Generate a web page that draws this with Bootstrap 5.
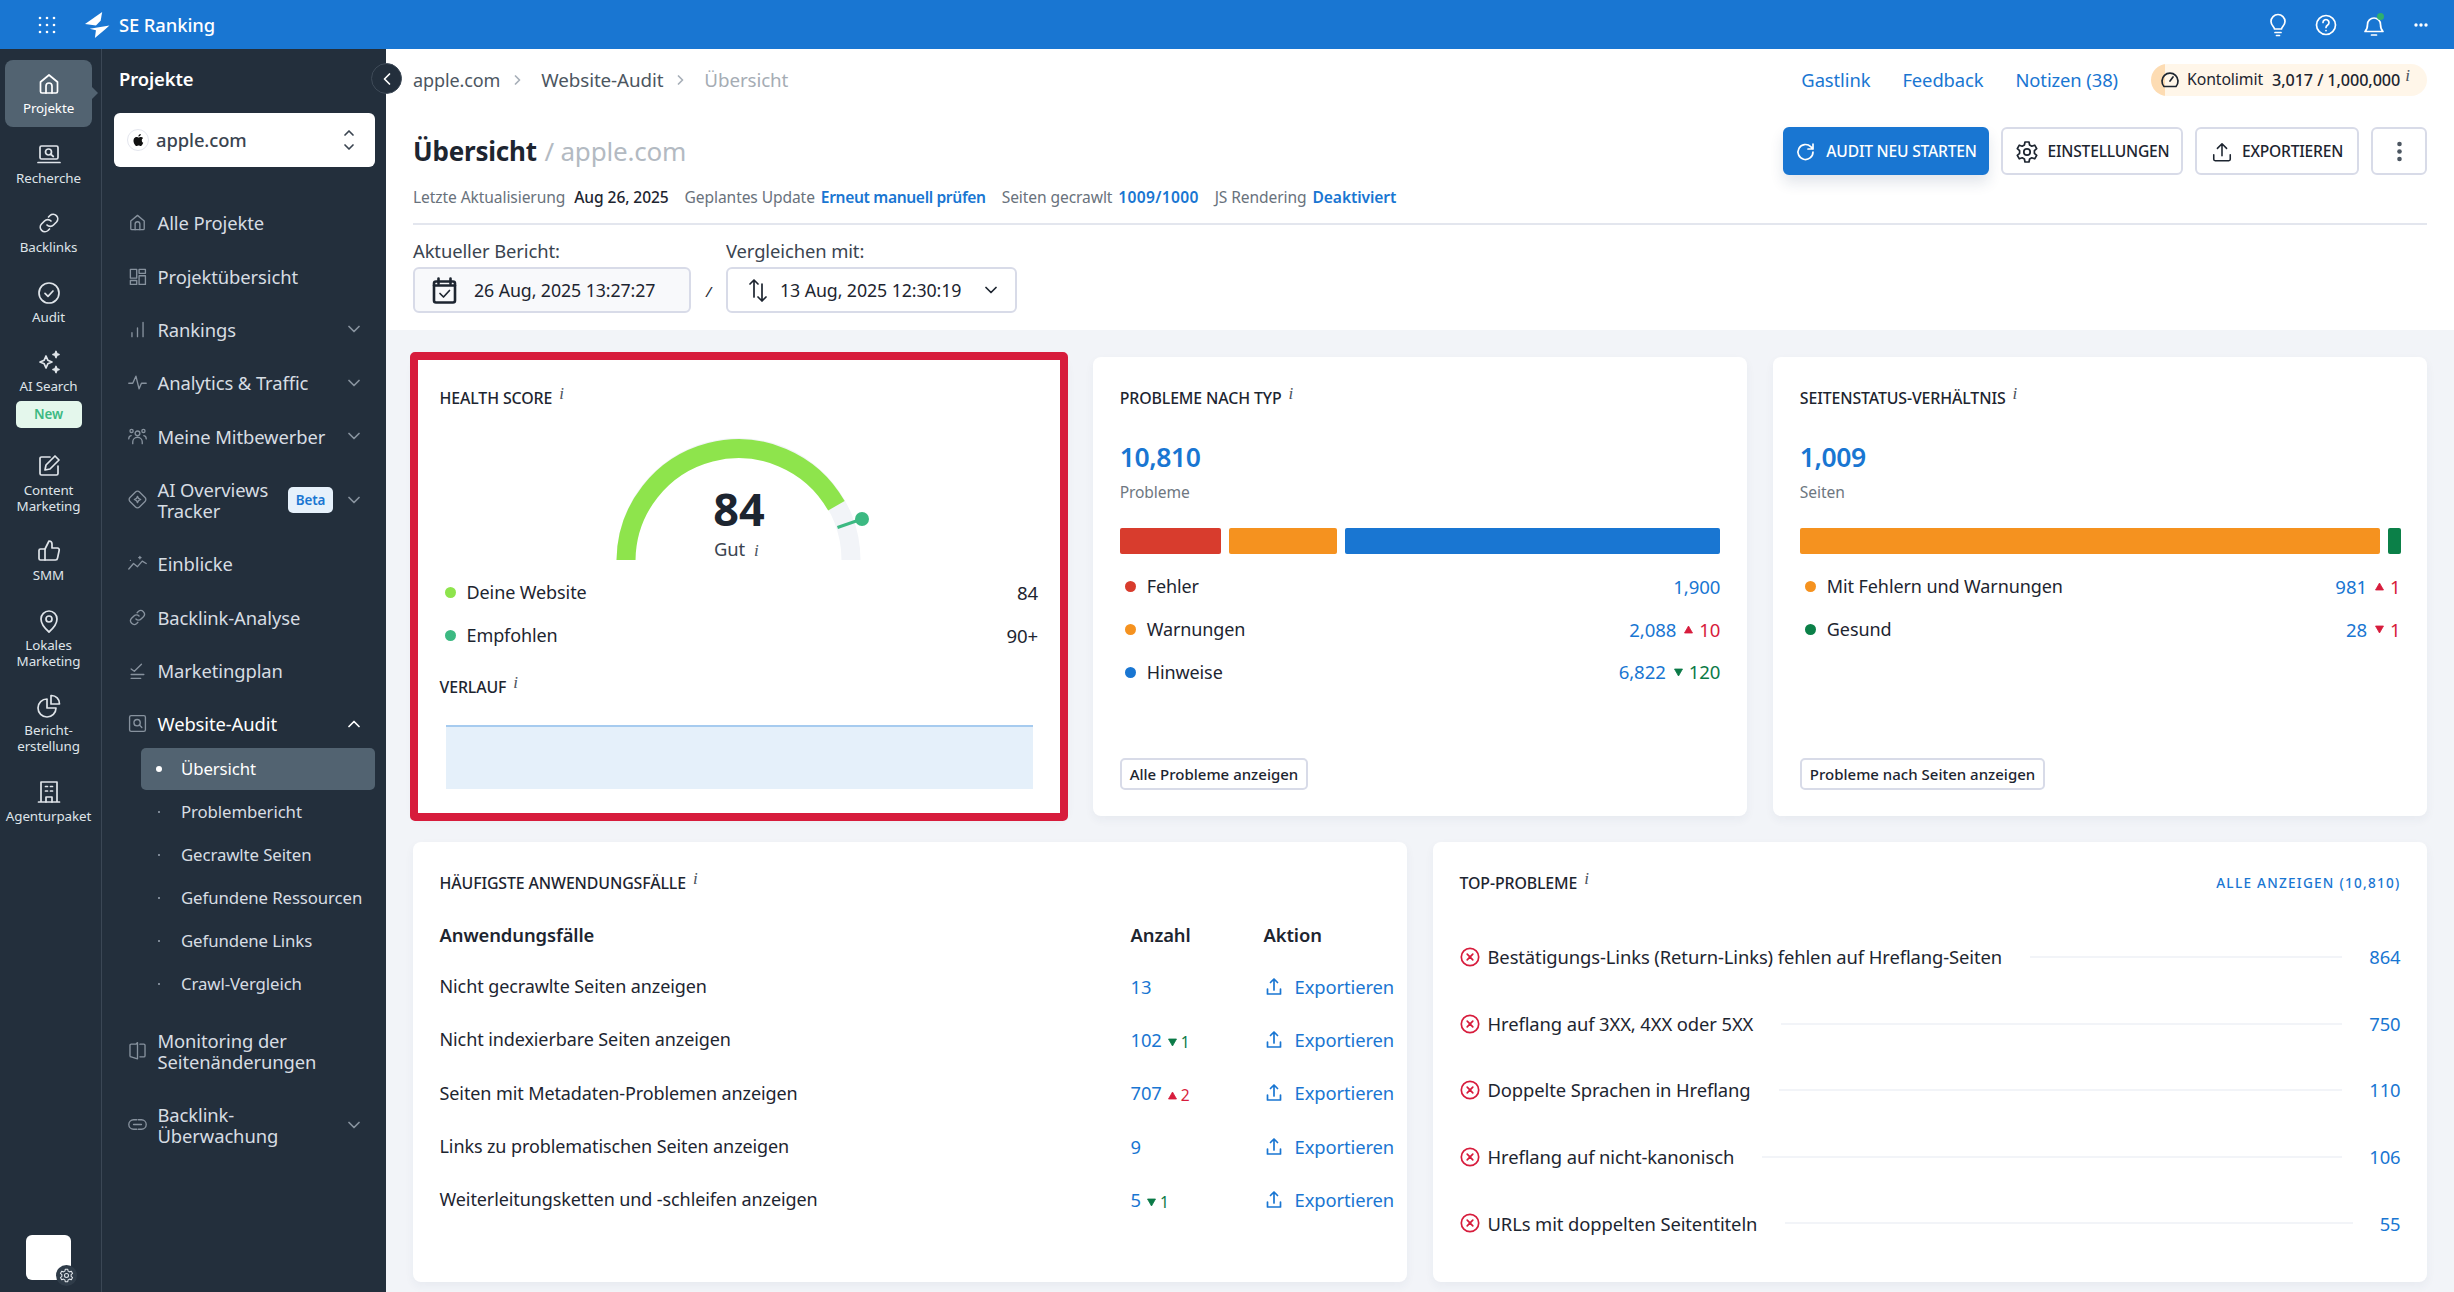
<!DOCTYPE html>
<html lang="de">
<head>
<meta charset="utf-8">
<title>SE Ranking – Übersicht</title>
<link href="https://cdn.jsdelivr.net/npm/bootstrap@5.3.0/dist/css/bootstrap.min.css" rel="stylesheet">
<style>
:root{--blue:#1976d2;--ink:#1d2530;--side:#232f3c;--grey:#6e7781;--line:#d8dbe8;--bg:#f2f4f8}
html,body{height:100%}
body{font-family:"Noto Sans",sans-serif;font-size:18.4px;color:var(--ink);background:var(--bg);overflow:hidden;letter-spacing:-.1px}
a{color:var(--blue);text-decoration:none}
svg{display:block;flex:none}
.ic{fill:none;stroke:currentColor;stroke-width:1.7;stroke-linecap:round;stroke-linejoin:round}
.topbar{height:49px;background:var(--blue);color:#fff;padding:0}
.topbar .grid-ic{margin-left:38px}
.topbar .logo{margin-left:29px}
.topbar .brand{margin-left:9px;font-size:18.4px;font-weight:500;color:#fff}
.topbar .tools{gap:26px;margin-left:auto;margin-right:26px}
.topbar .more{margin-left:3px}
.bell-dot{position:absolute;right:1px;top:0;width:7px;height:7px;border-radius:50%;background:#2fae6e}
.shell{height:1243px}
.rail{width:102px;flex:none;background:var(--side);border-right:1px solid #3b4755;padding:11px 0 0 5px;position:relative}
.rail-item{width:87px;padding:12px 0 13.5px;color:#dfe4e9;text-align:center;font-size:13.4px;line-height:16px;border-radius:8px;position:relative;display:block}
.rail-item svg{margin:0 auto 4px;width:24px;height:24px}
.rail-item.active{background:#526371;color:#fff;height:67px;margin-bottom:2.5px;padding-bottom:0}
.rail-item.active::after{content:"";position:absolute;right:-6px;top:27px;border-left:6px solid #526371;border-top:6px solid transparent;border-bottom:6px solid transparent}
.new-badge{display:block;width:66px;height:27px;line-height:27px;margin:7px auto 0;background:#e4f7ec;color:#3cb982;border-radius:5px;font-weight:600;font-size:13.4px}
.rail-foot{position:absolute;left:26px;top:1186px;width:45px;height:45px;background:#fff;border-radius:6px}
.rail-gear{position:absolute;right:-6px;bottom:-6px;width:21px;height:21px;border-radius:50%;background:#2f3c49;color:#dfe4e9;display:flex;align-items:center;justify-content:center}
.side{width:284px;flex:none;background:var(--side);padding:0 11px 0 12px;position:relative;color:#d7dde3}
.side h2{font-size:18.4px;font-weight:600;color:#fff;margin:0;height:64px;line-height:60px;padding-left:5px}
.proj-sel{height:54px;background:#fff;border-radius:6px;color:#3a4450;padding:0 20px 0 13px;font-size:18.4px;margin-bottom:29px;font-weight:500}
.apple-dot{width:22px;height:22px;border-radius:50%;background:#fff;border:1px solid #e4e6ee;color:#111;margin-right:7px;display:flex;align-items:center;justify-content:center}
.nav-row{min-height:53.4px;padding-left:14px;padding-right:12px;color:#d7dde3;font-size:18.4px;line-height:21px;display:flex;align-items:center}
.nav-row>.ni{width:19px;height:19px;color:#87929e;margin-right:10.5px}
.nav-row .nt{flex:1}
.nav-row .chev{width:12px;height:12px;color:#87929e;margin-right:3px}
.nav-row.tall{min-height:74px}
.nav-row.open{color:#fff;margin-bottom:-3px}
.nav-row.open .chev{color:#fff}
.beta{background:#e6f1fb;color:var(--blue);font-size:13.4px;font-weight:600;line-height:26px;height:26px;width:45px;text-align:center;border-radius:5px;margin-right:15px}
.nav-sub{min-height:43px;margin-left:27px;padding-left:15px;font-size:16.8px;color:#d7dde3;display:flex;align-items:center;border-radius:5px}
.nav-sub::before{content:"";width:2px;height:2px;border-radius:50%;background:#9aa5b0;margin-right:21px;margin-left:2px}
.nav-sub.active{background:#526371;color:#fff;height:42px;min-height:42px;margin-bottom:1px}
.nav-sub.active::before{width:6px;height:6px;background:#fff;margin-left:0;margin-right:19px}
.sub-wrap{margin-bottom:8px}
.collapse-btn{position:absolute;left:-15px;width:31px;height:31px;border-radius:50%;top:14px;background:var(--side);border:1px solid #3f4b58;color:#fff;display:flex;align-items:center;justify-content:center;z-index:3}
.main{flex:1;min-width:0;position:relative}
.head{background:#fff;padding:0 27px 17px 27px}
.crumb{height:62px;font-size:18.8px;color:#4c5661}
.crumb>span:first-child{font-size:18px}
.crumb .sep{width:7px;height:10px;color:#a7afb8;margin:0 20px 0 14px}
.crumb .cur{color:#a5acb4}
.toplinks{margin-left:auto;gap:32px;font-size:18.4px}
.limit{height:32px;margin-left:33px;width:276px;border-radius:16px;background:linear-gradient(90deg,#fddcb3 14px,#fff6e9 14px);padding-left:9px;font-size:15.8px;color:var(--ink)}
.limit svg{margin-right:7px}
.limit b{font-weight:500;margin-left:9px;font-size:16.2px}
.limit .info{margin-left:5px;vertical-align:0;margin-top:-8px}
.title-row{padding-top:16px;height:64px}
.page-title{font-size:26px;font-weight:700;margin:2px 0 0;letter-spacing:-.2px}
.page-title span{font-weight:400;color:#b3bac2;margin-left:1px}
.acts{margin-left:auto;gap:12px}
.btn-act{height:48px;font-size:15.6px;font-weight:500;text-transform:uppercase;border:2px solid var(--line);background:#fff;color:var(--ink);border-radius:6px;display:flex;align-items:center;justify-content:center;padding:1px 0 0;gap:9px;letter-spacing:-.2px}
.btn-act.prim{background:var(--blue);border-color:var(--blue);color:#fff;box-shadow:0 8px 14px rgba(25,50,90,.12);width:206px}
.btn-act.w-set{width:182px}
.btn-act.w-exp{width:164px}
.btn-act.w-more{width:56px;padding:0}
.meta{margin-top:12px;font-size:15.6px;line-height:20px;color:#69727c}
.meta>span{margin-right:16px}
.meta b{font-weight:600;color:var(--blue);margin-left:6px}
.meta b.tight{letter-spacing:-.35px}
.meta b.wide{letter-spacing:.3px}
.meta em{font-style:normal;font-weight:500;color:var(--ink);margin-left:9px}
.head hr{margin:16px 0 15px;border:0;height:2px;background:#e3e6ee;opacity:1}
.rep-lab{line-height:22px;margin-bottom:5px;color:#3a4450;font-size:18.4px}
.dbox{height:46px;border:2px solid var(--line);border-radius:6px;font-size:17.8px}
.dbox.a{width:278px;background:#f8f9fb;padding-left:17px;gap:17px}
.dbox.b{width:291px;padding-left:20px;gap:12px}
.dbox .cd{margin-left:12px;color:var(--ink)}
.slash{width:35px;text-align:center;font-size:15px;font-style:italic;margin-top:auto;margin-bottom:11px}
.content{padding:27px 27px 0 27px}
.grid3{display:grid;grid-template-columns:repeat(3,1fr);grid-template-rows:459px;gap:26.5px;height:459px}
.grid2{display:grid;grid-template-columns:1fr 1fr;grid-template-rows:440px;gap:26px;height:440px;margin-top:26px}
.panel{border:0;border-radius:8px;background:#fff;box-shadow:0 4px 10px rgba(40,60,100,.05);position:relative}
.panel .card-body{padding:30px 26.5px 26px;display:flex;flex-direction:column}
.ptitle{font-size:15.9px;font-weight:500;line-height:22px;text-transform:uppercase;margin:0;color:var(--ink);letter-spacing:-.12px}
.info{font-family:"Liberation Serif",serif;font-style:italic;font-size:17px;line-height:0;color:#4b545e;margin-left:7px;vertical-align:5px;text-transform:none}
.hl-frame{position:absolute;top:-5px;bottom:-5px;left:-3px;right:-1px;border:8px solid #d71c3c;border-radius:5px;pointer-events:none}
.bignum{font-size:26.5px;font-weight:600;line-height:36px;color:var(--blue);margin-top:30px;letter-spacing:-.4px}
.sublab{font-size:15.6px;line-height:22px;color:#6e7781;margin-top:6px}
.stack{height:26px;margin-top:25px;gap:8px;display:flex}
.stack i{display:block;border-radius:2px;height:26px}
.rows{margin-top:11.6px}
.lrow{height:42.7px;display:flex;align-items:center;font-size:18px}
.dot{width:11px;height:11px;border-radius:50%;margin:0 11px 0 5px;flex:none}
.val{margin-left:auto;color:var(--blue);font-size:18.6px}
.delta{display:inline-flex;align-items:center;margin-left:8px;gap:6px;font-size:18.6px}
.up{color:#d71c3c}.down{color:#0b7a47}
.tri{width:9px;height:9px}
.btn-small{height:32px;padding:0 8px;font-size:15px;font-weight:500;line-height:28px;color:var(--ink);border:2px solid var(--line);border-radius:5px;background:#fff;margin-top:auto;align-self:flex-start}
.gauge{margin:21px auto 0;width:280px;height:130px}
.case-table{margin:0;width:960px;table-layout:fixed;--bs-table-bg:transparent;color:var(--ink)}
.case-table th,.case-table td{padding:0;vertical-align:middle;border:0;color:var(--ink);background:transparent}
.case-table th{height:50px;font-weight:600}
.case-table td{height:53.3px}
.case-table td:first-child{font-size:18px}
.case-table a{color:var(--blue)}
.case-table .delta{margin-left:6px;font-size:15.6px;gap:4px}
.exp{gap:13px}
.exp svg{margin-left:2px}
.top-row{height:66.6px;display:flex;align-items:center}
.top-row .xic{margin-right:8px;color:#d71c3c}
.top-row .rule{flex:1;height:2px;background:var(--bg);margin:0 27px 0 28px}
.all-link{margin-left:auto;font-size:13.6px;letter-spacing:1.25px;font-weight:500;text-transform:uppercase}
</style>
</head>
<body>
<svg width="0" height="0" style="position:absolute">
<defs>
<symbol id="home" viewBox="0 0 24 24"><path d="M3.500 19.500V10L12 3l8.500 7v9.500a1.500 1.500 0 0 1-1.500 1.500H5a1.500 1.500 0 0 1-1.500-1.500z"/><path d="M9 21v-7a3 3 0 0 1 6 0v7"/></symbol>
<symbol id="search" viewBox="0 0 24 24"><rect x="3" y="4" width="18" height="13" rx="1.500"/><path d="M1 20.500h22"/><circle cx="11.500" cy="10" r="3"/><path d="M14 12.500l2.300 2"/></symbol>
<symbol id="link" viewBox="0 0 24 24"><path d="M10 14a4.500 4.500 0 0 0 6.500 0l3-3a4.600 4.600 0 0 0-6.500-6.500l-1.500 1.500"/><path d="M14 10a4.500 4.500 0 0 0-6.500 0l-3 3a4.600 4.600 0 0 0 6.500 6.500l1.500-1.500"/></symbol>
<symbol id="check" viewBox="0 0 24 24"><circle cx="12" cy="12" r="10"/><path d="M8 12.300l3 3 5-5.300"/></symbol>
<symbol id="spark" viewBox="0 0 24 24"><path d="M9 6l1.800 4.200L15 12l-4.200 1.800L9 18l-1.800-4.200L3 12l4.200-1.800z"/><path d="M19 1.500l.8 2.200 2.200.8-2.200.8L19 7.500l-.8-2.200-2.200-.8 2.200-.8zM19 16.500l.8 2.200 2.200.8-2.200.8-.8 2.200-.8-2.200-2.200-.8 2.200-.8z" fill="currentColor"/></symbol>
<symbol id="edit" viewBox="0 0 24 24"><path d="M13 3H4.500A1.500 1.500 0 0 0 3 4.500v15A1.500 1.500 0 0 0 4.500 21h15a1.500 1.500 0 0 0 1.500-1.500V12"/><path d="M18 2l4 4-9 9-5 1 1-5z"/></symbol>
<symbol id="thumb" viewBox="0 0 24 24"><path d="M8 10l4-8a3 3 0 0 1 3 3v4h5.500a1.800 1.800 0 0 1 1.700 2.200l-1.700 8A2 2 0 0 1 18.500 21H8z"/><path d="M8 10H3.500A1.500 1.500 0 0 0 2 11.500v8A1.500 1.500 0 0 0 3.500 21H8"/></symbol>
<symbol id="pin" viewBox="0 0 24 24"><path d="M12 23s-8-7-8-13a8 8 0 0 1 16 0c0 6-8 13-8 13z"/><circle cx="12" cy="10" r="3"/></symbol>
<symbol id="pie" viewBox="0 0 24 24"><path d="M10 5a9 9 0 1 0 9 9h-9z"/><path d="M14 1.500a8 8 0 0 1 8.500 8.500H14z"/></symbol>
<symbol id="build" viewBox="0 0 24 24"><path d="M4 22V2h16v20M1.500 22h21"/><path d="M9 22v-5h6v5M8.500 6.500h2M13.500 6.500h2M8.500 11h2M13.500 11h2"/></symbol>
<symbol id="grid4" viewBox="0 0 24 24"><rect x="3" y="3" width="8" height="11"/><rect x="14" y="3" width="8" height="5"/><rect x="3" y="17" width="8" height="5"/><rect x="14" y="11" width="8" height="11"/></symbol>
<symbol id="bars" viewBox="0 0 24 24"><path d="M5 21v-5M12 21V10M19 21V3"/></symbol>
<symbol id="pulse" viewBox="0 0 24 24"><path d="M1 13h5l4-9 4 16 3-7h6"/></symbol>
<symbol id="people" viewBox="0 0 24 24"><circle cx="12" cy="8" r="3"/><circle cx="4.500" cy="5" r="2"/><circle cx="19.500" cy="5" r="2"/><path d="M6 21v-2a6 6 0 0 1 12 0v2M1 15a4 4 0 0 1 3-4M23 15a4 4 0 0 0-3-4"/></symbol>
<symbol id="diamond" viewBox="0 0 24 24"><path d="M9.500 2.500a3.500 3.500 0 0 1 5 0l7 7a3.500 3.500 0 0 1 0 5l-7 7a3.500 3.500 0 0 1-5 0l-7-7a3.500 3.500 0 0 1 0-5z"/><path d="M12 8l1.300 2.700L16 12l-2.700 1.300L12 16l-1.300-2.700L8 12l2.700-1.300z"/></symbol>
<symbol id="insight" viewBox="0 0 24 24"><path d="M1 19l6-7 5 4 6-7 5 3"/><path d="M3 8h.1M15 3v3M13.500 4.500h3"/></symbol>
<symbol id="plan" viewBox="0 0 24 24"><path d="M4 10l4 3 9-9M4 17h16M4 22h12"/></symbol>
<symbol id="audit" viewBox="0 0 24 24"><rect x="2" y="2" width="20" height="20" rx="2"/><circle cx="11.500" cy="11" r="4"/><path d="M14.500 14l3 3"/></symbol>
<symbol id="compare" viewBox="0 0 24 24"><path d="M10 4H4a1.500 1.500 0 0 0-1.500 1.500v13A1.500 1.500 0 0 0 4 20l8 2.500V2zM15 4h5a1.500 1.500 0 0 1 1.500 1.500v13A1.500 1.500 0 0 1 20 20h-5"/></symbol>
<symbol id="chain" viewBox="0 0 24 24"><path d="M11 6H7a6 6 0 0 0 0 12h4M13 6h4a6 6 0 0 1 0 12h-4M7 12h10"/></symbol>
<symbol id="down" viewBox="0 0 12 12"><path d="M1 3.500l5 5 5-5"/></symbol>
<symbol id="up" viewBox="0 0 12 12"><path d="M1 8.500l5-5 5 5"/></symbol>
<symbol id="gear" viewBox="0 0 24 24"><circle cx="12" cy="12" r="3.200"/><path d="M10 2h4l.6 3 2.200 1.200 2.900-1 2 3.500-2.300 2v2.600l2.300 2-2 3.500-2.900-1L14.600 19l-.6 3h-4l-.6-3-2.200-1.200-2.900 1-2-3.500 2.300-2v-2.600l-2.300-2 2-3.500 2.900 1L9.400 5z"/></symbol>
<symbol id="upload" viewBox="0 0 24 24"><path d="M12 16V3M7 8l5-5 5 5M3 15v5a1.500 1.500 0 0 0 1.500 1.500h15A1.500 1.500 0 0 0 21 20v-5"/></symbol>
<symbol id="xc" viewBox="0 0 20 20"><circle cx="10" cy="10" r="8.700"/><path d="M7.200 7.200l5.600 5.600M12.800 7.200l-5.600 5.600"/></symbol>
<symbol id="exp" viewBox="0 0 16 20"><path d="M8 13V2M4.500 5.500L8 2l3.500 3.500M1.500 12v5h13v-5"/></symbol>
<symbol id="triup" viewBox="0 0 9 9"><path d="M4.500 1L8.500 8H.5z" fill="currentColor" stroke="currentColor" stroke-width=".8" stroke-linejoin="round"/></symbol>
<symbol id="tridn" viewBox="0 0 9 9"><path d="M4.500 8L8.500 1H.5z" fill="currentColor" stroke="currentColor" stroke-width=".8" stroke-linejoin="round"/></symbol>
</defs>
</svg>

<nav class="navbar topbar d-flex flex-nowrap align-items-center justify-content-start">
  <svg class="grid-ic" width="18" height="18" viewBox="0 0 18 18" fill="#fff"><circle cx="2" cy="2" r="1.300"/><circle cx="9" cy="2" r="1.300"/><circle cx="16" cy="2" r="1.300"/><circle cx="2" cy="9" r="1.300"/><circle cx="9" cy="9" r="1.300"/><circle cx="16" cy="9" r="1.300"/><circle cx="2" cy="16" r="1.300"/><circle cx="9" cy="16" r="1.300"/><circle cx="16" cy="16" r="1.300"/></svg>
  <svg class="logo" width="25" height="26" viewBox="0 0 24 25" fill="#fff"><path d="M16.500 0L0 11.500l10.500 1.500L15 8.500z"/><path d="M23.500 13L4.500 16l6 1.500L9.500 25l10-8.500z"/></svg>
  <a class="brand" href="#">SE Ranking</a>
  <div class="tools d-flex align-items-center">
    <svg class="ic" width="22" height="24" viewBox="0 0 22 24"><path d="M7.500 16c0-2-3.500-3.500-3.500-7.500a7 7 0 0 1 14 0c0 4-3.500 5.500-3.500 7.500zM8 19.500h6M9.500 22.500h3"/></svg>
    <svg class="ic" width="22" height="24" viewBox="0 0 22 24"><circle cx="11" cy="12" r="9.500"/><path d="M8 9.500a3 3 0 1 1 4.700 2.500c-1 .7-1.700 1.200-1.700 2.500"/><path d="M11 17.500v.1"/></svg>
    <span class="position-relative"><svg class="ic" width="22" height="24" viewBox="0 0 22 24"><path d="M2 18.500c2-2 2.500-3.500 2.500-7a6.500 6.500 0 0 1 13 0c0 3.500.5 5 2.500 7zM8.500 22h5"/></svg><span class="bell-dot"></span></span>
    <svg class="more" width="14" height="4" viewBox="0 0 14 4" fill="#fff"><circle cx="2" cy="2" r="1.700"/><circle cx="7" cy="2" r="1.700"/><circle cx="12" cy="2" r="1.700"/></svg>
  </div>
</nav>

<div class="shell d-flex">
  <div class="rail">
    <a class="rail-item active" href="#"><svg class="ic"><use href="#home"/></svg>Projekte</a>
    <a class="rail-item" href="#"><svg class="ic"><use href="#search"/></svg>Recherche</a>
    <a class="rail-item" href="#"><svg class="ic"><use href="#link"/></svg>Backlinks</a>
    <a class="rail-item" href="#"><svg class="ic"><use href="#check"/></svg>Audit</a>
    <a class="rail-item" href="#"><svg class="ic"><use href="#spark"/></svg>AI Search<span class="new-badge">New</span></a>
    <a class="rail-item" href="#"><svg class="ic"><use href="#edit"/></svg>Content<br>Marketing</a>
    <a class="rail-item" href="#"><svg class="ic"><use href="#thumb"/></svg>SMM</a>
    <a class="rail-item" href="#"><svg class="ic"><use href="#pin"/></svg>Lokales<br>Marketing</a>
    <a class="rail-item" href="#"><svg class="ic"><use href="#pie"/></svg>Bericht-<br>erstellung</a>
    <a class="rail-item" href="#"><svg class="ic"><use href="#build"/></svg>Agenturpaket</a>
    <div class="rail-foot"><span class="rail-gear"><svg class="ic" width="15" height="15"><use href="#gear"/></svg></span></div>
  </div>

  <div class="side">
    <h2>Projekte</h2>
    <div class="proj-sel d-flex align-items-center">
      <span class="apple-dot"><svg width="12" height="14" viewBox="0 0 12 14" fill="currentColor"><path d="M9.800 7.400c0-1.500 1.200-2.200 1.300-2.300-.7-1-1.800-1.200-2.200-1.200-.9-.1-1.800.6-2.300.6s-1.200-.6-2-.6C3.500 3.900 2.500 4.500 2 5.400.9 7.300 1.700 10 2.700 11.500c.5.800 1.100 1.600 1.900 1.500.8 0 1-.5 2-.5s1.200.5 2 .5 1.300-.7 1.800-1.500c.6-.8.800-1.600.8-1.700 0 0-1.400-.6-1.400-2.400zM8.200 2.800c.4-.5.700-1.200.6-1.900-.6 0-1.300.4-1.800.9-.4.400-.7 1.100-.6 1.800.7.100 1.400-.3 1.800-.8z"/></svg></span>
      <span class="flex-grow-1">apple.com</span>
      <svg class="ic" width="12" height="22" viewBox="0 0 12 22" stroke-width="1.800"><path d="M2 6l4-4 4 4M2 16l4 4 4-4"/></svg>
    </div>
    <a class="nav-row" href="#"><svg class="ic ni"><use href="#home"/></svg><span class="nt">Alle Projekte</span></a>
    <a class="nav-row" href="#"><svg class="ic ni"><use href="#grid4"/></svg><span class="nt">Projektübersicht</span></a>
    <a class="nav-row" href="#"><svg class="ic ni"><use href="#bars"/></svg><span class="nt">Rankings</span><svg class="ic chev"><use href="#down"/></svg></a>
    <a class="nav-row" href="#"><svg class="ic ni"><use href="#pulse"/></svg><span class="nt">Analytics &amp; Traffic</span><svg class="ic chev"><use href="#down"/></svg></a>
    <a class="nav-row" href="#"><svg class="ic ni"><use href="#people"/></svg><span class="nt">Meine Mitbewerber</span><svg class="ic chev"><use href="#down"/></svg></a>
    <a class="nav-row tall" href="#"><svg class="ic ni"><use href="#diamond"/></svg><span class="nt">AI Overviews<br>Tracker</span><span class="beta">Beta</span><svg class="ic chev"><use href="#down"/></svg></a>
    <a class="nav-row" href="#"><svg class="ic ni"><use href="#insight"/></svg><span class="nt">Einblicke</span></a>
    <a class="nav-row" href="#"><svg class="ic ni"><use href="#link"/></svg><span class="nt">Backlink-Analyse</span></a>
    <a class="nav-row" href="#"><svg class="ic ni"><use href="#plan"/></svg><span class="nt">Marketingplan</span></a>
    <a class="nav-row open" href="#"><svg class="ic ni"><use href="#audit"/></svg><span class="nt">Website-Audit</span><svg class="ic chev"><use href="#up"/></svg></a>
    <div class="sub-wrap">
      <a class="nav-sub active" href="#">Übersicht</a>
      <a class="nav-sub" href="#">Problembericht</a>
      <a class="nav-sub" href="#">Gecrawlte Seiten</a>
      <a class="nav-sub" href="#">Gefundene Ressourcen</a>
      <a class="nav-sub" href="#">Gefundene Links</a>
      <a class="nav-sub" href="#">Crawl-Vergleich</a>
    </div>
    <a class="nav-row tall" href="#"><svg class="ic ni"><use href="#compare"/></svg><span class="nt">Monitoring der<br>Seitenänderungen</span></a>
    <a class="nav-row tall" href="#"><svg class="ic ni"><use href="#chain"/></svg><span class="nt">Backlink-<br>Überwachung</span><svg class="ic chev"><use href="#down"/></svg></a>
  </div>

  <div class="main">
    <span class="collapse-btn"><svg class="ic" width="10" height="14" viewBox="0 0 10 14" stroke-width="2"><path d="M7.500 2L2.500 7l5 5"/></svg></span>
    <div class="head">
      <div class="crumb d-flex align-items-center">
        <span>apple.com</span><svg class="ic sep" viewBox="0 0 7 10"><path d="M1.500 1l4 4-4 4"/></svg>
        <span>Website-Audit</span><svg class="ic sep" viewBox="0 0 7 10"><path d="M1.500 1l4 4-4 4"/></svg>
        <span class="cur">Übersicht</span>
        <div class="toplinks d-flex"><a href="#">Gastlink</a><a href="#">Feedback</a><a href="#">Notizen (38)</a></div>
        <div class="limit d-flex align-items-center">
          <svg class="ic" width="20" height="20" viewBox="0 0 20 20"><path d="M4 16.500a8 8 0 1 1 12 0z"/><path d="M10 11l3-4"/></svg>
          <span>Kontolimit</span><b>3,017 / 1,000,000</b><span class="info">i</span>
        </div>
      </div>
      <div class="title-row d-flex align-items-center">
        <h1 class="page-title">Übersicht <span>/ apple.com</span></h1>
        <div class="acts d-flex">
          <button class="btn btn-act prim" type="button"><svg class="ic" width="22" height="22" viewBox="0 0 22 22" stroke-width="2"><path d="M18 11a7.500 7.500 0 1 1-2.300-5.400L18 8M18 3v5h-5"/></svg>Audit neu starten</button>
          <button class="btn btn-act w-set" type="button"><svg class="ic" width="24" height="24"><use href="#gear"/></svg>Einstellungen</button>
          <button class="btn btn-act w-exp" type="button"><svg class="ic" width="22" height="22"><use href="#upload"/></svg>Exportieren</button>
          <button class="btn btn-act w-more" type="button"><svg width="5" height="21" viewBox="0 0 5 21" fill="#4c5661"><circle cx="2.500" cy="3" r="2.300"/><circle cx="2.500" cy="10.500" r="2.300"/><circle cx="2.500" cy="18" r="2.300"/></svg></button>
        </div>
      </div>
      <div class="meta d-flex">
        <span>Letzte Aktualisierung<em>Aug 26, 2025</em></span>
        <span>Geplantes Update<b class="tight">Erneut manuell prüfen</b></span>
        <span>Seiten gecrawlt<b class="wide">1009/1000</b></span>
        <span>JS Rendering<b>Deaktiviert</b></span>
      </div>
      <hr>
      <div class="d-flex">
        <div>
          <div class="rep-lab">Aktueller Bericht:</div>
          <div class="dbox a d-flex align-items-center">
            <svg width="25" height="27" viewBox="0 0 25 27" fill="none" stroke="#1d2530" stroke-width="2.600" stroke-linecap="round" stroke-linejoin="round"><rect x="2" y="4.500" width="21" height="21" rx="2"/><path d="M6.500 1.500v5M18.500 1.500v5M2 8.500h21"/><path d="M8 16.500l3.500 3.500 6-6.500" stroke-width="1.700"/></svg>
            <span>26 Aug, 2025 13:27:27</span>
          </div>
        </div>
        <span class="slash">/</span>
        <div>
          <div class="rep-lab">Vergleichen mit:</div>
          <div class="dbox b d-flex align-items-center">
            <svg class="ic" width="20" height="26" viewBox="0 0 20 26" stroke-width="2.200" stroke="#1d2530"><path d="M6 20V3M2 7l4-4 4 4M14 7v17M10 20l4 4 4-4"/></svg>
            <span>13 Aug, 2025 12:30:19</span>
            <svg class="ic cd" width="12" height="12"><use href="#down"/></svg>
          </div>
        </div>
      </div>
    </div>

    <div class="content">
      <div class="grid3">
        <div class="card panel">
          <div class="card-body">
            <h3 class="ptitle">Health Score<span class="info">i</span></h3>
            <svg class="gauge" viewBox="0 0 280 130">
              <path d="M26 130a112.500 112.500 0 0 1 225 0" fill="none" stroke="#f2f4f8" stroke-width="19"/>
              <path d="M26 130a112.500 112.500 0 0 1 210.400-54.200" fill="none" stroke="#8ee44c" stroke-width="19"/>
              <path d="M237.500 97.500L262 89" stroke="#3cb982" stroke-width="3"/>
              <circle cx="262" cy="89" r="7" fill="#3cb982"/>
              <text x="139" y="95.500" text-anchor="middle" font-size="45" font-weight="700" fill="#1d2530" font-family="Noto Sans">84</text>
              <text x="114" y="126" font-size="18.400" fill="#3a4450" font-family="Noto Sans">Gut</text>
              <text x="154" y="126" font-size="17" font-style="italic" fill="#4b545e" font-family="Liberation Serif">i</text>
            </svg>
            <div style="margin-top:11.5px;padding-right:2px">
              <div class="lrow"><span class="dot" style="background:#8ee44c"></span>Deine Website<span class="val" style="color:var(--ink)">84</span></div>
              <div class="lrow"><span class="dot" style="background:#3cb982"></span>Empfohlen<span class="val" style="color:var(--ink)">90+</span></div>
            </div>
            <h3 class="ptitle" style="margin-top:19px">Verlauf<span class="info">i</span></h3>
            <div style="margin:27px 7px 0 6px;height:64px;background:#e5f0fa;border-top:2px solid #a6cbef"></div>
          </div>
          <div class="hl-frame"></div>
        </div>

        <div class="card panel">
          <div class="card-body">
            <h3 class="ptitle">Probleme nach Typ<span class="info">i</span></h3>
            <div class="bignum">10,810</div>
            <div class="sublab">Probleme</div>
            <div class="stack"><i style="width:101px;background:#d83c2d"></i><i style="width:108px;background:#f5921f"></i><i class="flex-fill" style="background:#1976d2"></i></div>
            <div class="rows">
              <div class="lrow"><span class="dot" style="background:#d83c2d"></span>Fehler<span class="val">1,900</span></div>
              <div class="lrow"><span class="dot" style="background:#f5921f"></span>Warnungen<span class="val">2,088</span><span class="delta up"><svg class="tri"><use href="#triup"/></svg>10</span></div>
              <div class="lrow"><span class="dot" style="background:#1976d2"></span>Hinweise<span class="val">6,822</span><span class="delta down"><svg class="tri"><use href="#tridn"/></svg>120</span></div>
            </div>
            <button class="btn btn-small" type="button">Alle Probleme anzeigen</button>
          </div>
        </div>

        <div class="card panel">
          <div class="card-body">
            <h3 class="ptitle">Seitenstatus-Verhältnis<span class="info">i</span></h3>
            <div class="bignum">1,009</div>
            <div class="sublab">Seiten</div>
            <div class="stack"><i class="flex-fill" style="background:#f5921f"></i><i style="width:13px;background:#0b8048"></i></div>
            <div class="rows">
              <div class="lrow"><span class="dot" style="background:#f5921f"></span>Mit Fehlern und Warnungen<span class="val">981</span><span class="delta up"><svg class="tri"><use href="#triup"/></svg>1</span></div>
              <div class="lrow"><span class="dot" style="background:#0b8048"></span>Gesund<span class="val">28</span><span class="delta up"><svg class="tri"><use href="#tridn"/></svg>1</span></div>
            </div>
            <button class="btn btn-small" type="button">Probleme nach Seiten anzeigen</button>
          </div>
        </div>
      </div>

      <div class="grid2">
        <div class="card panel">
          <div class="card-body pe-0">
            <h3 class="ptitle">Häufigste Anwendungsfälle<span class="info">i</span></h3>
            <table class="table case-table mt-3">
              <colgroup><col style="width:691px"><col style="width:133px"><col></colgroup>
              <thead><tr><th>Anwendungsfälle</th><th>Anzahl</th><th>Aktion</th></tr></thead>
              <tbody>
                <tr><td>Nicht gecrawlte Seiten anzeigen</td><td><a href="#">13</a></td><td><a class="exp d-flex align-items-center" href="#"><svg class="ic" width="16" height="20"><use href="#exp"/></svg>Exportieren</a></td></tr>
                <tr><td>Nicht indexierbare Seiten anzeigen</td><td><a href="#">102</a><span class="delta down"><svg class="tri"><use href="#tridn"/></svg>1</span></td><td><a class="exp d-flex align-items-center" href="#"><svg class="ic" width="16" height="20"><use href="#exp"/></svg>Exportieren</a></td></tr>
                <tr><td>Seiten mit Metadaten-Problemen anzeigen</td><td><a href="#">707</a><span class="delta up"><svg class="tri"><use href="#triup"/></svg>2</span></td><td><a class="exp d-flex align-items-center" href="#"><svg class="ic" width="16" height="20"><use href="#exp"/></svg>Exportieren</a></td></tr>
                <tr><td>Links zu problematischen Seiten anzeigen</td><td><a href="#">9</a></td><td><a class="exp d-flex align-items-center" href="#"><svg class="ic" width="16" height="20"><use href="#exp"/></svg>Exportieren</a></td></tr>
                <tr><td>Weiterleitungsketten und -schleifen anzeigen</td><td><a href="#">5</a><span class="delta down"><svg class="tri"><use href="#tridn"/></svg>1</span></td><td><a class="exp d-flex align-items-center" href="#"><svg class="ic" width="16" height="20"><use href="#exp"/></svg>Exportieren</a></td></tr>
              </tbody>
            </table>
          </div>
        </div>

        <div class="card panel">
          <div class="card-body">
            <div class="d-flex align-items-center" style="margin-bottom:29.7px"><h3 class="ptitle">Top-Probleme<span class="info">i</span></h3><a class="all-link" href="#">Alle anzeigen (10,810)</a></div>
            <div class="top-row"><svg class="ic xic" width="20" height="20"><use href="#xc"/></svg>Bestätigungs-Links (Return-Links) fehlen auf Hreflang-Seiten<span class="rule"></span><a href="#">864</a></div>
            <div class="top-row"><svg class="ic xic" width="20" height="20"><use href="#xc"/></svg>Hreflang auf 3XX, 4XX oder 5XX<span class="rule"></span><a href="#">750</a></div>
            <div class="top-row"><svg class="ic xic" width="20" height="20"><use href="#xc"/></svg>Doppelte Sprachen in Hreflang<span class="rule"></span><a href="#">110</a></div>
            <div class="top-row"><svg class="ic xic" width="20" height="20"><use href="#xc"/></svg>Hreflang auf nicht-kanonisch<span class="rule"></span><a href="#">106</a></div>
            <div class="top-row"><svg class="ic xic" width="20" height="20"><use href="#xc"/></svg>URLs mit doppelten Seitentiteln<span class="rule"></span><a href="#">55</a></div>
          </div>
        </div>
      </div>
    </div>
  </div>
</div>
<script src="https://cdn.jsdelivr.net/npm/bootstrap@5.3.0/dist/js/bootstrap.bundle.min.js"></script>
</body>
</html>
